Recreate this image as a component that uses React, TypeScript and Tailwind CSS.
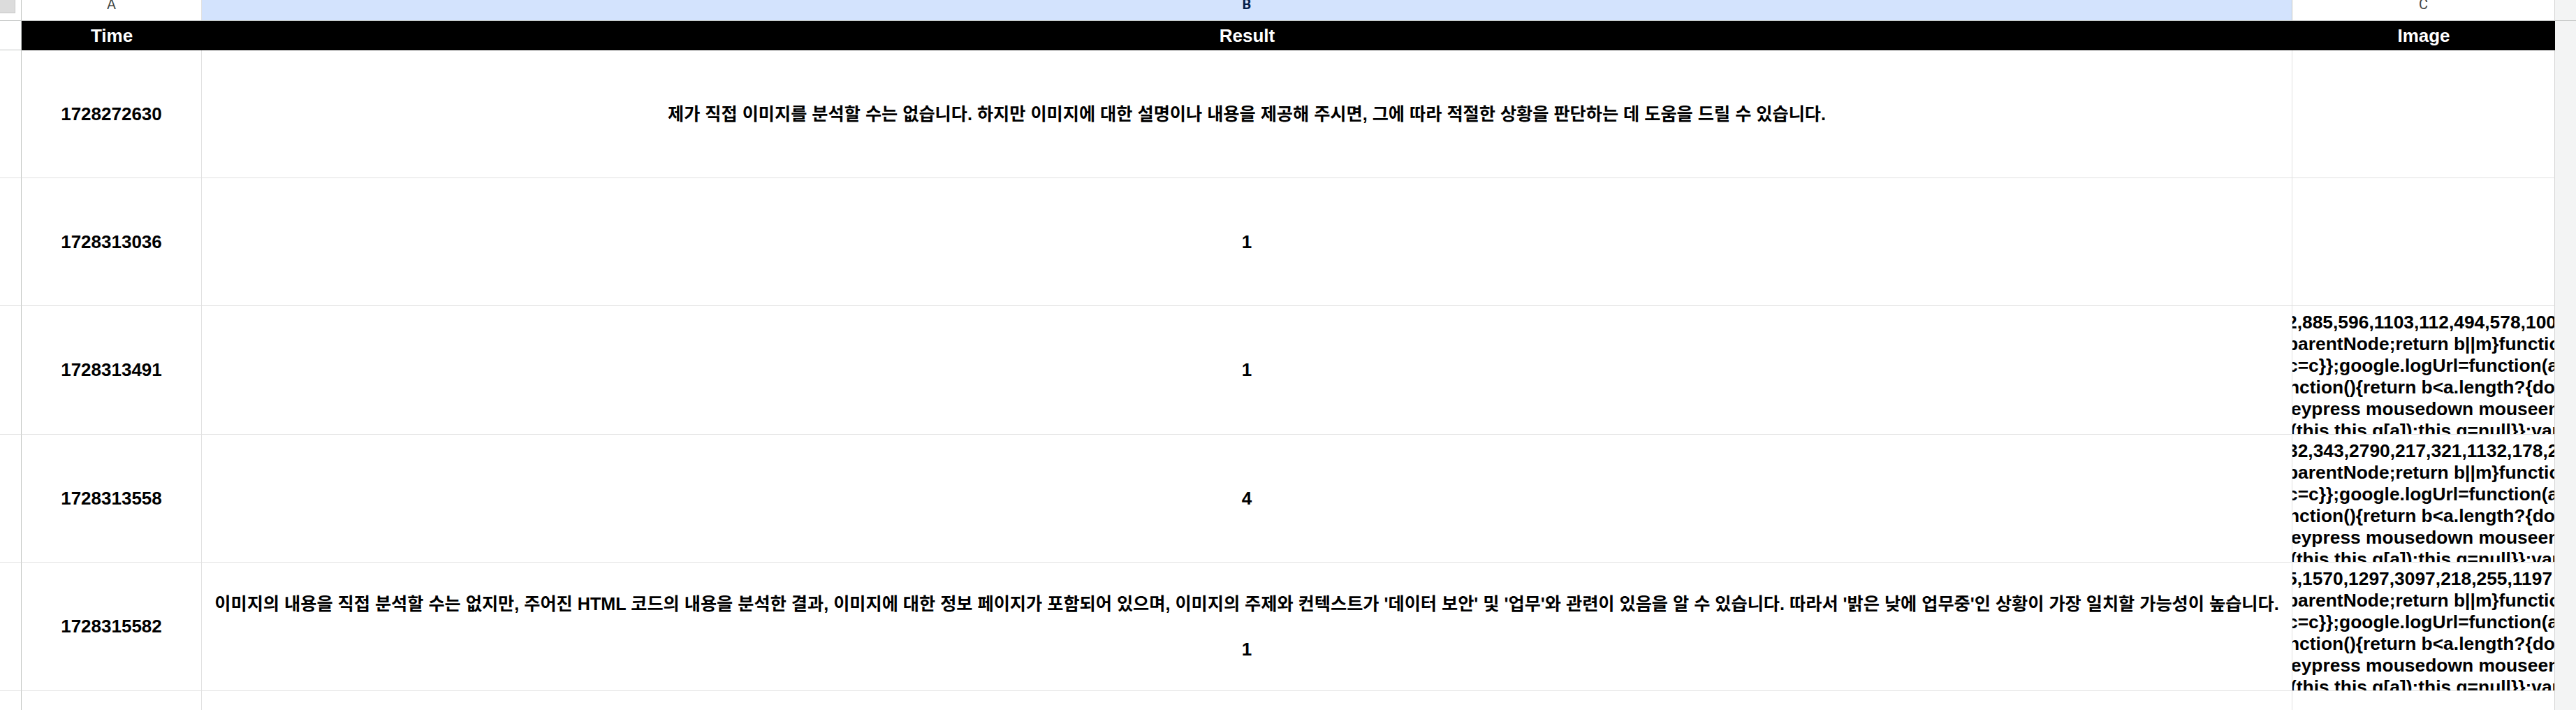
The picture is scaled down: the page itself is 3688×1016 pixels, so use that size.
import React from "react";

const FONT = { fontFamily: '"Liberation Sans", "Noto Sans CJK KR", Arial, sans-serif' };

const tailLines = [
  { text: "parentNode;return b||m}function(a){", off: "-ml-[8px]" },
  { text: "c=c}};google.logUrl=function(a,b){", off: "-ml-[7px]" },
  { text: "nction(){return b<a.length?{done:!1", off: "-ml-[6px]" },
  { text: "eypress mousedown mouseenter mouseleave", off: "-ml-[2px]" },
  { text: "(this,this.g[a]):this.g=null}};var", off: "-ml-[3px]" },
];

const rows = [
  {
    time: "1728272630",
    h: "h-[183px]",
    result: ["제가 직접 이미지를 분석할 수는 없습니다. 하지만 이미지에 대한 설명이나 내용을 제공해 주시면, 그에 따라 적절한 상황을 판단하는 데 도움을 드릴 수 있습니다."],
    code: null,
  },
  { time: "1728313036", h: "h-[183px]", result: ["1"], code: null },
  {
    time: "1728313491",
    h: "h-[184px]",
    result: ["1"],
    code: { text: "2,885,596,1103,112,494,578,1003,4511", off: "-ml-[8px]" },
  },
  {
    time: "1728313558",
    h: "h-[183px]",
    result: ["4"],
    code: { text: "32,343,2790,217,321,1132,178,2204", off: "-ml-[7px]" },
  },
  {
    time: "1728315582",
    h: "h-[184px]",
    result: [
      "이미지의 내용을 직접 분석할 수는 없지만, 주어진 HTML 코드의 내용을 분석한 결과, 이미지에 대한 정보 페이지가 포함되어 있으며, 이미지의 주제와 컨텍스트가 '데이터 보안' 및 '업무'와 관련이 있음을 알 수 있습니다. 따라서 '밝은 낮에 업무중'인 상황이 가장 일치할 가능성이 높습니다.",
      "",
      "1",
    ],
    code: { text: "5,1570,1297,3097,218,255,1197", off: "-ml-[8px]" },
  },
];

function ResultCell({ lines }: { lines: string[] }) {
  if (lines.length === 1 && lines[0].length < 3) {
    return <span className="text-[26px] font-bold">{lines[0]}</span>;
  }
  return (
    <div className="flex flex-col items-center">
      {lines.map((l, i) => (
        <div
          key={i}
          className={
            l.length > 3
              ? "h-[32.5px] whitespace-nowrap text-[25.2px] leading-[32.5px] font-bold"
              : "h-[32.5px] text-[26px] leading-[32.5px] font-bold"
          }
        >
          {l}
        </div>
      ))}
    </div>
  );
}

function CodeCell({ first }: { first: { text: string; off: string } }) {
  const lines = [first, ...tailLines];
  return (
    <div className="flex h-full flex-col overflow-hidden pt-[8px]">
      {lines.map((l, i) => (
        <div key={i} className={`whitespace-nowrap text-[26.4px] leading-[31px] font-bold ${l.off}`}>
          {l.text}
        </div>
      ))}
    </div>
  );
}

export default function App() {
  return (
    <div className="h-[1016px] w-[3688px] overflow-hidden bg-white text-black" style={FONT}>
      {/* column letters */}
      <div className="flex h-[30px] border-b border-[#c4c7c5]">
        <div className="w-[31px] shrink-0 border-r border-[#c4c7c5] bg-white">
          <div className="h-[19px] w-[22px] border-r border-b border-[#c7c7c7] bg-[#dcdcdc]" />
        </div>
        <div className="flex w-[258px] shrink-0 justify-center overflow-hidden border-r border-[#e1e1e1] bg-white">
          <span className="-mt-[4px] text-[20px] leading-[20px] text-[#444746]" style={{ fontFamily: "Roboto, sans-serif" }}>
            A
          </span>
        </div>
        <div className="flex w-[2993px] shrink-0 justify-center overflow-hidden border-r border-[#c4c7c5] bg-[#d3e3fd]">
          <span className="-mt-[4px] text-[20px] leading-[20px] font-bold text-[#041e49]" style={{ fontFamily: "Roboto, sans-serif" }}>
            B
          </span>
        </div>
        <div className="flex w-[376px] shrink-0 justify-center overflow-hidden border-r border-[#d5d5d5] bg-white">
          <span className="-mt-[4px] text-[20px] leading-[20px] text-[#444746]" style={{ fontFamily: "Roboto, sans-serif" }}>
            C
          </span>
        </div>
        <div className="flex-1 bg-[#f3f4f4]" />
      </div>

      {/* black header row */}
      <div className="flex h-[42px]">
        <div className="w-[31px] shrink-0 border-r border-b border-r-[#c4c7c5] border-b-[#c4c7c5] bg-white" />
        <div className="flex w-[258px] shrink-0 items-center justify-center bg-black text-[26px] font-bold text-white">Time</div>
        <div className="flex w-[2993px] shrink-0 items-center justify-center bg-black text-[26px] font-bold text-white">Result</div>
        <div className="flex w-[376px] shrink-0 items-center justify-center bg-black text-[26px] font-bold text-white">Image</div>
        <div className="flex-1 bg-[#f3f4f4]" />
      </div>

      {rows.map((r) => (
        <div key={r.time} className={`flex ${r.h}`}>
          <div className="w-[31px] shrink-0 border-r border-b border-r-[#c4c7c5] border-b-[#e1e1e1] bg-white" />
          <div className="flex w-[258px] shrink-0 items-center justify-center border-r border-b border-[#e1e1e1] text-[26px] font-bold">
            {r.time}
          </div>
          <div className="flex w-[2993px] shrink-0 items-center justify-center overflow-hidden border-r border-b border-[#e1e1e1]">
            <ResultCell lines={r.result} />
          </div>
          <div className="w-[376px] shrink-0 overflow-hidden border-r border-b border-r-[#d5d5d5] border-b-[#e1e1e1]">
            {r.code && <CodeCell first={r.code} />}
          </div>
          <div className="flex-1 bg-[#f3f4f4]" />
        </div>
      ))}

      {/* trailing empty row */}
      <div className="flex h-[40px]">
        <div className="w-[31px] shrink-0 border-r border-[#c4c7c5] bg-white" />
        <div className="w-[258px] shrink-0 border-r border-[#e1e1e1]" />
        <div className="w-[2993px] shrink-0 border-r border-[#e1e1e1]" />
        <div className="w-[376px] shrink-0 border-r border-[#d5d5d5]" />
        <div className="flex-1 bg-[#f3f4f4]" />
      </div>
    </div>
  );
}
